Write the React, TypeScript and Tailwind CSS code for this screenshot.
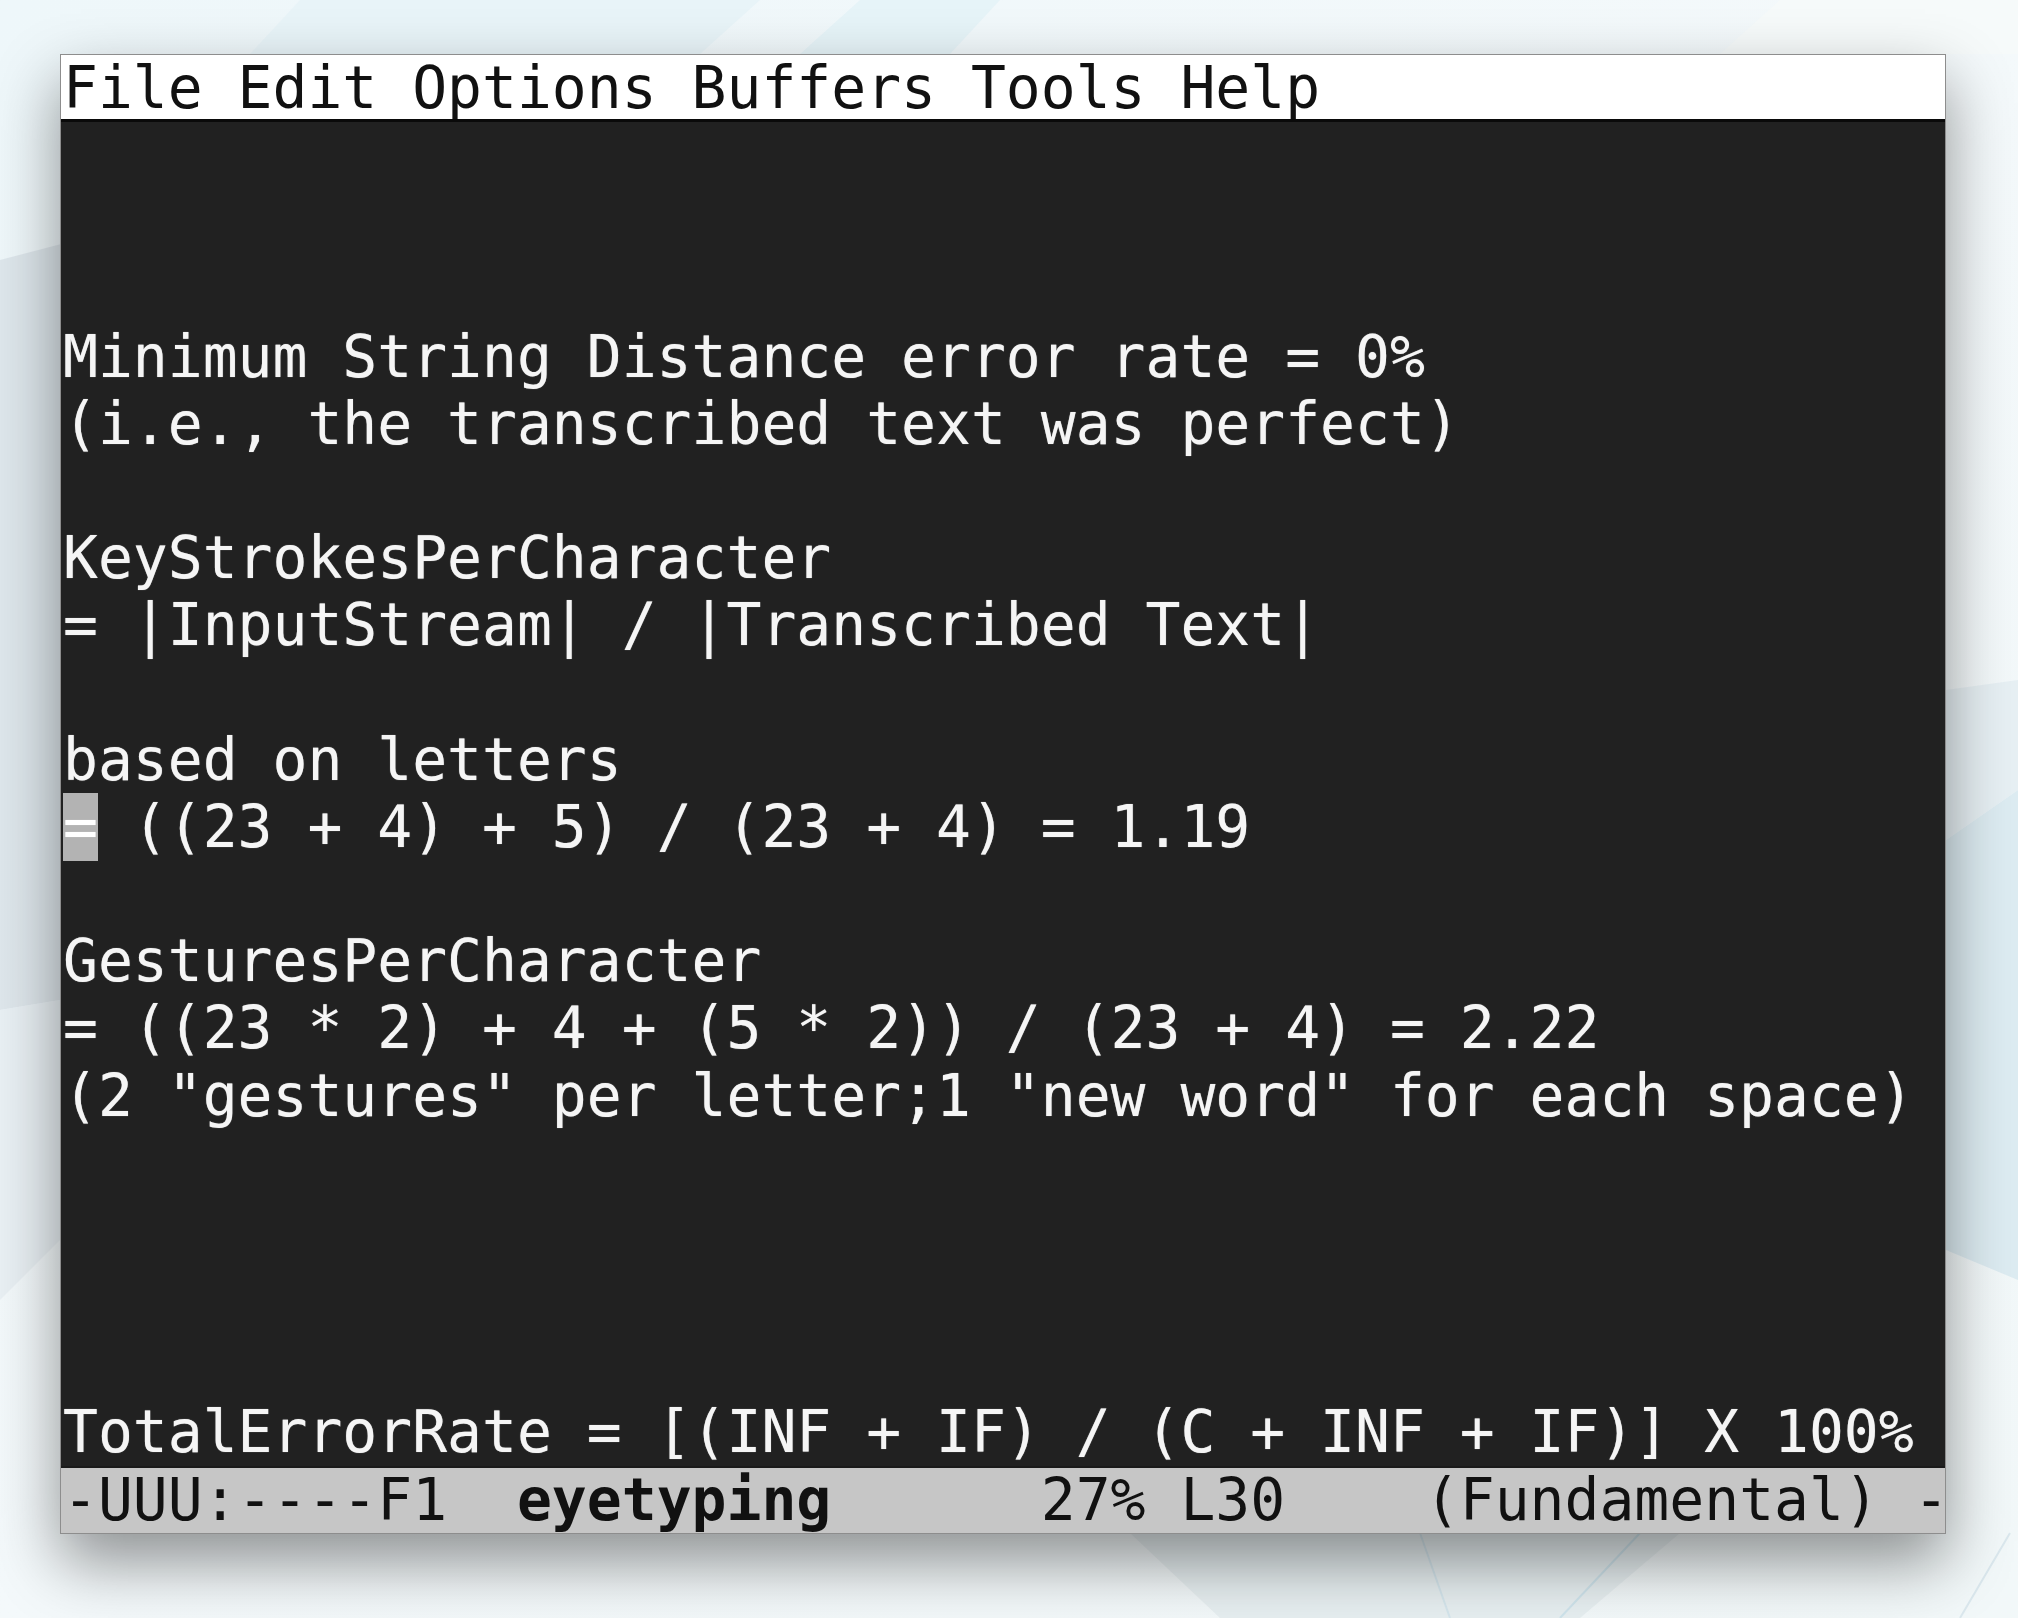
import React from 'react';

// text area rows of the emacs buffer (20 rows, blank ones are empty strings)
const bufferRows: string[] = [
  '',
  '',
  '',
  'Minimum String Distance error rate = 0%',
  '(i.e., the transcribed text was perfect)',
  '',
  'KeyStrokesPerCharacter',
  '= |InputStream| / |Transcribed Text|',
  '',
  'based on letters',
  'CURSOR',
  '',
  'GesturesPerCharacter',
  '= ((23 * 2) + 4 + (5 * 2)) / (23 + 4) = 2.22',
  '(2 "gestures" per letter;1 "new word" for each space)',
  '',
  '',
  '',
  '',
  'TotalErrorRate = [(INF + IF) / (C + INF + IF)] X 100%',
];

const Backdrop: React.FC = () => (
  <svg className="absolute inset-0" width="2018" height="1618" viewBox="0 0 2018 1618">
    <polygon points="0,260 230,200 60,1000 0,1010" fill="#d9e2e8" opacity="0.8" />
    <polygon points="0,1010 60,1000 60,1240 0,1300" fill="#e6eef2" opacity="0.8" />
    <polygon points="250,54 300,0 760,0 700,54" fill="#e6f3f8" opacity="0.8" />
    <polygon points="800,54 860,0 1000,0 950,54" fill="#e3f2f8" opacity="0.8" />
    <polygon points="1720,54 1780,0 2018,0 2018,54" fill="#f6f9fa" opacity="0.9" />
    <polygon points="1946,840 2018,790 2018,1280 1946,1250" fill="#d7e9f0" opacity="0.8" />
    <polygon points="1946,690 2018,680 2018,790 1946,840" fill="#e4eef2" opacity="0.8" />
    <polygon points="1130,1533 1680,1533 1580,1618 1220,1618" fill="#e6edf0" opacity="0.9" />
    <line x1="1420" y1="1533" x2="1450" y2="1618" stroke="#d5e6ed" strokeWidth="2" />
    <line x1="1640" y1="1533" x2="1560" y2="1618" stroke="#cfe4ec" strokeWidth="2" />
    <line x1="2010" y1="1533" x2="1960" y2="1618" stroke="#dbe8ee" strokeWidth="2" />
  </svg>
);

export default function App() {
  return (
    <div className="relative w-[2018px] h-[1618px] overflow-hidden bg-gradient-to-br from-[#eef7fa] via-[#f4f9fb] to-[#f2f8f9]">
      <Backdrop />
      <div className="relative pt-[54px] pl-[60px]">
        <div className="w-[1886px] flex flex-col border border-[#8d8d8d] shadow-[0_28px_60px_rgba(0,0,0,0.42)] font-['DejaVu_Sans_Mono',monospace] text-[58px] whitespace-pre overflow-hidden">
          <div className="h-[64px] leading-[66px] bg-white text-[#111] pl-[2px]">
            File Edit Options Buffers Tools Help
          </div>
          <div className="bg-[#212121] text-[#f5f5f5] border-t-[3px] border-[#0a0a0a] pl-[2px] [text-shadow:0_0_1px_rgba(255,255,255,0.6)]">
            {bufferRows.map((row, i) =>
              row === 'CURSOR' ? (
                <div key={i} className="h-[67.2px] leading-[67.2px]">
                  <span className="bg-[#b3b3b3] text-white">=</span>
                  {' ((23 + 4) + 5) / (23 + 4) = 1.19'}
                </div>
              ) : (
                <div key={i} className="h-[67.2px] leading-[67.2px]">
                  {row}
                </div>
              )
            )}
          </div>
          <div className="h-[67px] leading-[64px] bg-[#c6c6c6] text-[#111] border-t-[2px] border-[#1a1a1a] pl-[2px]">
            {'-UUU:----F1  '}
            <span className="font-bold">eyetyping</span>
            {'      27% L30    (Fundamental) -'}
          </div>
        </div>
      </div>
    </div>
  );
}
